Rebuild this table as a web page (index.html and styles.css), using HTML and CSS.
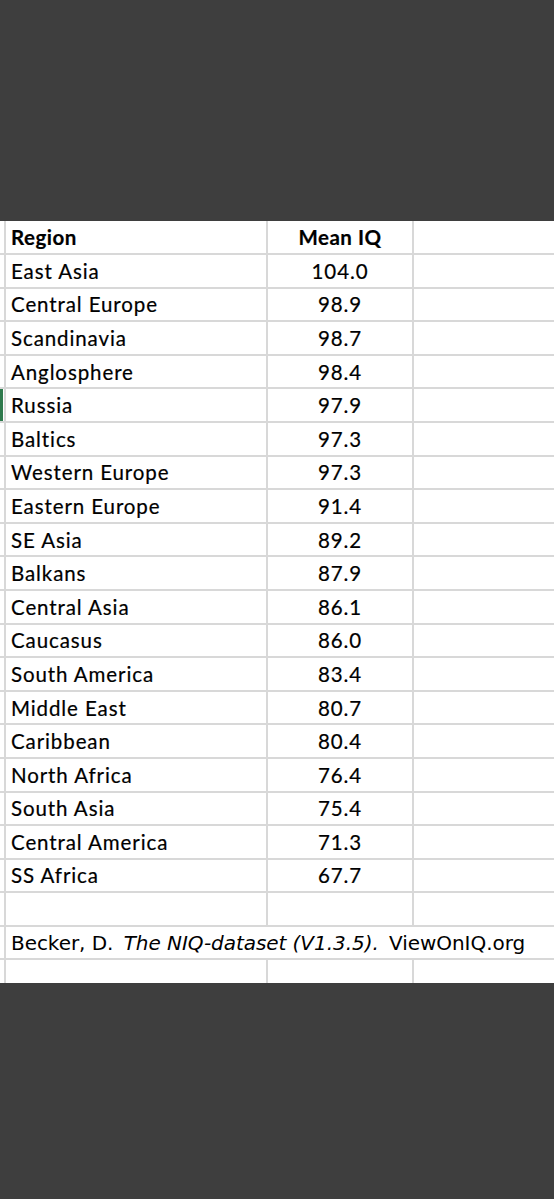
FILE: index.html
```html
<!DOCTYPE html>
<html lang="en">
<head>
  <meta charset="UTF-8" />
  <meta name="viewport" content="width=device-width, initial-scale=1.0"/>
  <title>Mean IQ by Region</title>
  <link rel="stylesheet" href="styles.css">
</head>
<body>
  <div class="sheet">
    <div class="row head">
      <div class="cell gutter"></div>
      <div class="cell name">Region</div>
      <div class="cell num">Mean IQ</div>
      <div class="cell"></div>
    </div>

    <div id="rows"></div>

    <div class="row">
      <div class="cell gutter"></div>
      <div class="cell name"></div>
      <div class="cell num"></div>
      <div class="cell"></div>
    </div>

    <div class="row source">
      <div class="cell gutter"></div>
      <div class="cell cite"><span>Becker, D. <i>The NIQ-dataset (V1.3.5).</i> ViewOnIQ.org</span></div>
    </div>

    <div class="row">
      <div class="cell gutter"></div>
      <div class="cell name"></div>
      <div class="cell num"></div>
      <div class="cell"></div>
    </div>
  </div>

  <script>
    const data = [
      ["East Asia", "104.0"],
      ["Central Europe", "98.9"],
      ["Scandinavia", "98.7"],
      ["Anglosphere", "98.4"],
      ["Russia", "97.9"],
      ["Baltics", "97.3"],
      ["Western Europe", "97.3"],
      ["Eastern Europe", "91.4"],
      ["SE Asia", "89.2"],
      ["Balkans", "87.9"],
      ["Central Asia", "86.1"],
      ["Caucasus", "86.0"],
      ["South America", "83.4"],
      ["Middle East", "80.7"],
      ["Caribbean", "80.4"],
      ["North Africa", "76.4"],
      ["South Asia", "75.4"],
      ["Central America", "71.3"],
      ["SS Africa", "67.7"]
    ];

    const rows = document.getElementById("rows");

    data.forEach(([region, iq]) => {
      const row = document.createElement("div");
      row.className = "row";

      const gutter = document.createElement("div");
      gutter.className = "cell gutter";
      if (region === "Russia") gutter.classList.add("selected");

      const name = document.createElement("div");
      name.className = "cell name";
      name.textContent = region;

      const num = document.createElement("div");
      num.className = "cell num";
      num.textContent = iq;

      const blank = document.createElement("div");
      blank.className = "cell";

      row.append(gutter, name, num, blank);
      rows.appendChild(row);
    });
  </script>
</body>
</html>
```

FILE: styles.css
```css
body {
  margin: 0;
  background-color: #3e3e3e;
  font-family: Lato, "Open Sans", sans-serif;
  color: #000;
}

.sheet {
  margin-top: 221px;
  height: 762px;
  background: #fff;
  overflow: hidden;
}

.row {
  display: grid;
  grid-template-columns: 4px 262px 146px 1fr;
  height: 33.6px;
}

.row.head {
  height: 34px;
}

.cell {
  border-left: 2px solid #d8d8d8;
  border-bottom: 2px solid #d8d8d8;
  font-size: 20.5px;
  letter-spacing: 0.9px;
  display: flex;
  align-items: center;
  white-space: nowrap;
  -webkit-text-stroke: 0.2px #000;
}

.cell.gutter {
  border-left: none;
}

.cell.gutter.selected {
  box-shadow: inset 3px 0 0 #2f7a4d;
}

.name {
  padding-left: 5px;
}

.num {
  justify-content: center;
}

.head .cell {
  font-weight: bold;
  letter-spacing: 0.5px;
}

.source {
  grid-template-columns: 4px 1fr;
}

.cite {
  padding-left: 5px;
  font-family: "DejaVu Sans", sans-serif;
  font-size: 20px;
  letter-spacing: -0.05px;
  -webkit-text-stroke: 0;
}

.cite i {
  margin: 0 4px;
}
```
